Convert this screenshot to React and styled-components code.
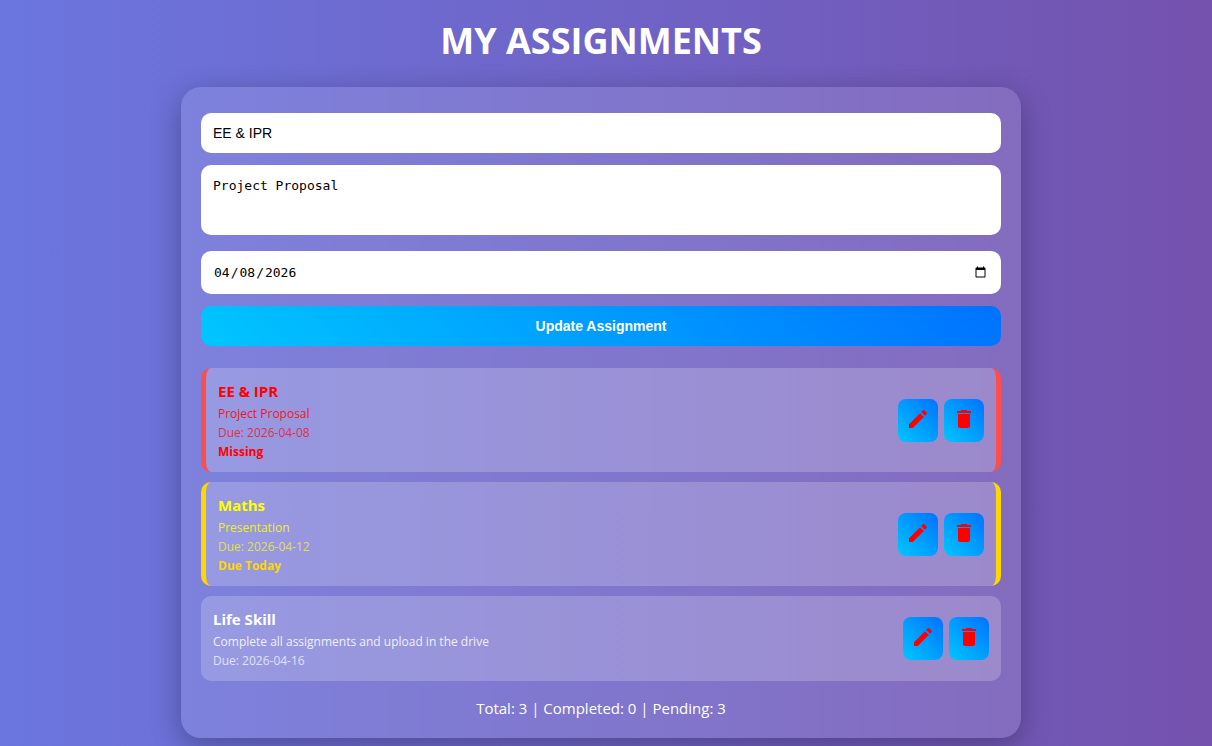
import React, { useState } from 'react';
import { MdDelete, MdEdit } from 'react-icons/md';
import styled, { createGlobalStyle } from 'styled-components';

const initialAssignments = [
	{
		id: 1,
		title: 'EE & IPR',
		description: 'Project Proposal',
		due: '2026-04-08',
		status: 'missing'
	},
	{
		id: 2,
		title: 'Maths',
		description: 'Presentation',
		due: '2026-04-12',
		status: 'today'
	},
	{
		id: 3,
		title: 'Life Skill',
		description: 'Complete all assignments and upload in the drive',
		due: '2026-04-16',
		status: 'upcoming'
	}
];

const statuses = {
	missing: { label: 'Missing', text: '#ff0000', accent: '#ff4d4d', badge: '#ff0000' },
	today: { label: 'Due Today', text: '#ffff00', accent: '#ffd700', badge: '#ffd700' },
	upcoming: { label: '', text: '#ffffff' }
};

const emptyForm = { title: '', description: '', due: '' };

function App() {
	const [assignments, setAssignments] = useState(initialAssignments);
	const [editingId, setEditingId] = useState(1);
	const [form, setForm] = useState(initialAssignments[0]);

	const handleChange = (e) => {
		setForm({ ...form, [e.target.name]: e.target.value });
	};

	const handleSubmit = (e) => {
		e.preventDefault();
		if (!form.title) return;
		if (editingId) {
			setAssignments(
				assignments.map((a) => (a.id === editingId ? { ...a, ...form } : a))
			);
		} else {
			setAssignments([
				...assignments,
				{ ...form, id: Date.now(), status: 'upcoming' }
			]);
		}
		setEditingId(null);
		setForm(emptyForm);
	};

	const handleEdit = (assignment) => {
		setEditingId(assignment.id);
		setForm(assignment);
	};

	const handleDelete = (id) => {
		setAssignments(assignments.filter((a) => a.id !== id));
	};

	return (
		<Page>
			<GlobalStyle />
			<Heading>MY ASSIGNMENTS</Heading>

			<Card>
				<Form onSubmit={handleSubmit}>
					<TextInput
						type="text"
						name="title"
						aria-label="Title"
						value={form.title}
						onChange={handleChange}
					/>
					<TextArea
						name="description"
						aria-label="Description"
						value={form.description}
						onChange={handleChange}
					/>
					<DateInput
						type="date"
						name="due"
						aria-label="Due date"
						value={form.due}
						onChange={handleChange}
					/>
					<SubmitButton type="submit">
						{editingId ? 'Update Assignment' : 'Add Assignment'}
					</SubmitButton>
				</Form>

				<List>
					{assignments.map((assignment) => {
						const status = statuses[assignment.status];
						return (
							<Item
								key={assignment.id}
								$color={status.text}
								$accent={status.accent}
							>
								<Details>
									<ItemTitle>{assignment.title}</ItemTitle>
									<Description>{assignment.description}</Description>
									<DueDate>Due: {assignment.due}</DueDate>
									{status.label && (
										<Status $color={status.badge}>{status.label}</Status>
									)}
								</Details>
								<Actions>
									<IconButton
										type="button"
										aria-label="Edit"
										onClick={() => handleEdit(assignment)}
									>
										<MdEdit />
									</IconButton>
									<IconButton
										type="button"
										aria-label="Delete"
										onClick={() => handleDelete(assignment.id)}
									>
										<MdDelete />
									</IconButton>
								</Actions>
							</Item>
						);
					})}
				</List>

				<Summary>
					Total: {assignments.length} | Completed: 0 | Pending:{' '}
					{assignments.length}
				</Summary>
			</Card>
		</Page>
	);
}

export default App;

const GlobalStyle = createGlobalStyle`
	* {
		box-sizing: border-box;
	}
	body {
		margin: 0;
		font-family: 'Segoe UI', 'Open Sans', 'Noto Sans', sans-serif;
		background: linear-gradient(to right, #6b76df, #7452ae);
		color: #fff;
	}
`;

const Page = styled.main`
	display: flex;
	flex-direction: column;
	align-items: center;
	min-height: 100vh;
	padding: 17px 20px 8px 10px;
`;

const Heading = styled.h1`
	margin: 0 0 22px;
	font-size: 36px;
	font-weight: 700;
	line-height: 48px;
`;

const Card = styled.section`
	width: 100%;
	max-width: 840px;
	padding: 26px 20px 19px;
	border-radius: 20px;
	background: rgba(255, 255, 255, 0.12);
	box-shadow: 0 8px 30px rgba(0, 0, 0, 0.3);
`;

const Form = styled.form`
	display: flex;
	flex-direction: column;
	gap: 12px;
`;

const TextInput = styled.input`
	width: 100%;
	height: 40px;
	padding: 12px;
	border: none;
	border-radius: 10px;
	outline: none;
	background: #fff;
	color: #000;
	font-family: 'Liberation Sans', Arial, sans-serif;
	font-size: 14px;
`;

const TextArea = styled.textarea`
	width: 100%;
	height: 70px;
	margin-bottom: 4px;
	padding: 12px;
	border: none;
	border-radius: 10px;
	outline: none;
	resize: none;
	background: #fff;
	color: #000;
	font-family: Consolas, 'DejaVu Sans Mono', monospace;
	font-size: 13px;
	line-height: 17px;
`;

const DateInput = styled(TextInput)`
	height: 43px;
	font-family: Consolas, 'DejaVu Sans Mono', monospace;
	font-size: 13px;
`;

const SubmitButton = styled.button`
	height: 40px;
	border: none;
	border-radius: 10px;
	background: linear-gradient(45deg, #00c6ff, #0072ff);
	color: #fff;
	font-family: 'Liberation Sans', Arial, sans-serif;
	font-size: 14px;
	font-weight: 700;
	cursor: pointer;
`;

const List = styled.ul`
	display: flex;
	flex-direction: column;
	gap: 10px;
	margin: 22px 0 16px;
	padding: 0;
	list-style: none;
`;

const Item = styled.li`
	display: flex;
	align-items: center;
	justify-content: space-between;
	padding: 12px;
	border: 0 solid ${(props) => props.$accent || 'transparent'};
	border-width: ${(props) => (props.$accent ? '0 5px' : '0')};
	border-radius: 10px;
	background: rgba(255, 255, 255, 0.2);
	color: ${(props) => props.$color};
`;

const Details = styled.div`
	display: flex;
	flex-direction: column;
`;

const ItemTitle = styled.h3`
	margin: 0;
	font-size: 15px;
	font-weight: 700;
	line-height: 23px;
`;

const Description = styled.p`
	margin: 2px 0 0;
	font-size: 12px;
	line-height: 18px;
	opacity: 0.85;
`;

const DueDate = styled.span`
	margin-top: 1px;
	font-size: 12px;
	line-height: 17px;
	opacity: 0.7;
`;

const Status = styled.span`
	margin-top: 2px;
	color: ${(props) => props.$color};
	font-size: 12px;
	font-weight: 700;
	line-height: 17px;
`;

const Actions = styled.div`
	display: flex;
	gap: 6px;
`;

const IconButton = styled.button`
	display: flex;
	width: 40px;
	height: 43px;
	padding: 8px;
	border: none;
	border-radius: 8px;
	background: linear-gradient(45deg, #00c6ff, #0072ff);
	color: #ff0000;
	font-size: 24px;
	cursor: pointer;
`;

const Summary = styled.p`
	margin: 0;
	font-size: 15px;
	line-height: 22px;
	text-align: center;
`;
